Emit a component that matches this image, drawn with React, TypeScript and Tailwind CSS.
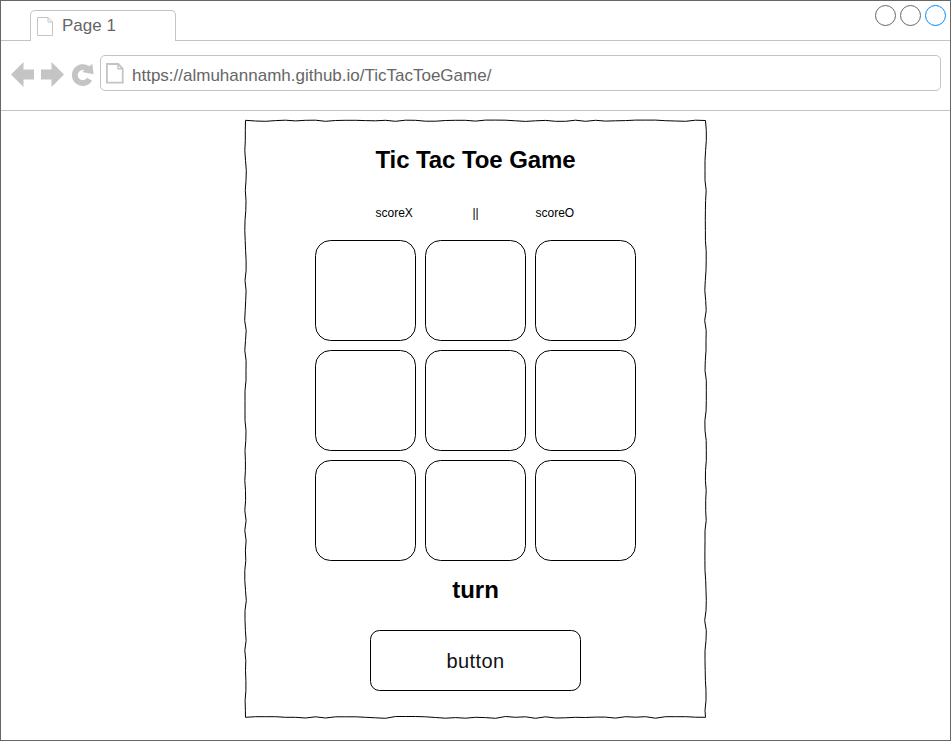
const top = [120.3,121,121.3,120.6,120.2,120.9,120.3,120.2,121.3,120.5,120.3,120.3,120.6,120.8,120.3,121.3,120.2,120.3,121.2,121.2,120.5,120.3,120.3,121.1,120.1,120.1,120.2,120.8,121.4,120.8,120.4,121.3,121.3,120.2,121.3,120.3,121.1,120.8,120.6,120.1,120.1,120.1,120.7,121,121.3,120.2,120.5];
const right = [705.5,706.3,706.3,705.6,705,705,705,706.2,705.6,705.4,705.3,705.4,705.4,706.2,706.2,706,705.3,704.8,705.7,706.2,704.7,706.2,706,706,705.3,705,706.3,706.3,706.3,706.1,704.9,705,706.2,706.3,706.3,705.5,705.4,706.2,705.7,705.7,706.2,705,705,704.9,704.9,705,705.7,706,706.3,706,704.7,706.3,706,705,705,705.2,705.4,706,706,705];
const bottom = [717.3,716.7,716.7,716.7,717.3,717.3,718,716.8,718,716.8,716.8,716.8,717.3,717.8,718.3,716.5,716.5,716.5,716.8,717.5,718.2,717.6,718.2,717.3,717.6,718.3,716.5,717.3,716.8,718.3,716.8,718,717.8,717.3,717.5,717.1,717.1,718.1,716.7,717.2,716.7,718.2,716.7,716.7,716.7,717.2,717.3];
const left = [245.5,245.3,245.3,244.8,245.5,246.3,246,245.3,246,245.8,245,244.8,245.2,245.6,246.1,246.1,245,246.1,245.7,245.2,244.7,246.2,245.5,244.8,246.1,246,246,245,245,245,245,246,245.8,245,245.4,245.4,244.8,245.5,245.6,244.8,246.1,244.8,246.1,245.4,245.8,244.8,244.8,245.5,246.3,245,245,245.4,246.1,244.8,245.8,245.5,245.9,245.9,245.1,245.4];

const points = [
  ...top.map((y, i) => `${245.5 + 10 * i},${y}`),
  ...right.slice(1).map((x, i) => `${x},${130.5 + 10 * i}`),
  ...bottom.map((y, i) => `${245.5 + 10 * i},${y}`).reverse(),
  ...left.map((x, i) => `${x},${120.5 + 10 * i}`).reverse(),
].join(" ");

export default function App() {
  return (
    <div className="relative flex h-[741px] w-[951px] flex-col border border-[#666] bg-white font-['Liberation_Sans',Arial,sans-serif]">
      <header className="flex h-10 shrink-0 items-end">
        <div className="h-px w-[29px] bg-[#c4c4c4]" />
        <div className="flex h-[31px] w-[146px] items-center rounded-t-[5px] border border-b-0 border-[#c4c4c4]">
          <svg className="ml-1.5 h-5 w-4 shrink-0" viewBox="0 0 16 20" fill="none" stroke="#c4c4c4">
            <path d="M.5 1.5H11L15.5 6V19.5H.5ZM11 1.5V6H15.5" />
          </svg>
          <span className="ml-[9px] text-[17px] leading-5 text-[#666]">Page 1</span>
        </div>
        <div className="relative h-full flex-1 border-b border-[#c4c4c4]">
          <svg className="absolute top-0 right-0 h-7 w-20" viewBox="870 1 80 28" fill="none">
            <circle cx="885.5" cy="15.5" r="10" stroke="#666" />
            <circle cx="910.5" cy="15.5" r="10" stroke="#666" />
            <circle cx="935.5" cy="15.5" r="10" stroke="#008cff" />
          </svg>
        </div>
      </header>
      <nav className="flex h-[70px] shrink-0 border-b border-[#c4c4c4] pt-[14px] pl-[9px]">
        <svg className="h-9 w-[90px] shrink-0" viewBox="10 55 90 36" fill="#c4c4c4">
          <path d="M11 74.5L23.5 62V69.5H34V79.5H23.5V87Z" />
          <path d="M64 74.5L51.5 62V69.5H41V79.5H51.5V87Z" />
          <path d="M89.6 79.3A8 8 0 1 1 87.8 68.8" fill="none" stroke="#c4c4c4" strokeWidth="5.8" />
          <path d="M92.3 63.7L93.6 74.3L82.2 72Z" />
        </svg>
        <div className="flex h-9 w-[841px] items-center rounded-[5px] border border-[#c4c4c4]">
          <svg className="ml-[3px] h-[22px] w-5 shrink-0" viewBox="0 0 20 22" fill="none" stroke="#c4c4c4" strokeWidth="1.8">
            <path d="M2.9 2H14.2L18.7 6.6V20.7H2.9Z" />
            <path d="M14 2V6.8H18.7" strokeWidth="1.4" />
          </svg>
          <span className="ml-2 pt-[5px] text-[17px] leading-5 text-[#666]">https://almuhannamh.github.io/TicTacToeGame/</span>
        </div>
      </nav>
      <svg className="pointer-events-none absolute -top-px -left-px h-[741px] w-[951px]" viewBox="0 0 951 741" fill="none" stroke="#000">
        <polygon points={points} strokeMiterlimit="10" />
      </svg>
      <main className="flex flex-col items-center text-black">
        <h1 className="mt-[34px] text-2xl leading-[30px] font-bold tracking-[-0.08px]">Tic Tac Toe Game</h1>
        <div className="mt-[31px] flex h-[14px] w-[200px] text-xs leading-[14px]">
          <span className="w-[97px]">scoreX</span>
          <span className="w-[63px]">||</span>
          <span>scoreO</span>
        </div>
        <div className="mt-5 grid grid-cols-3 gap-[9px]">
          {Array.from({ length: 9 }, (_, i) => (
            <div key={i} className="size-[101px] rounded-[15.5px] border border-black" />
          ))}
        </div>
        <h2 className="mt-[14px] text-2xl leading-[30px] font-bold">turn</h2>
        <button className="mt-[25px] h-[61px] w-[211px] rounded-[9.5px] border border-black text-xl tracking-[0.4px] text-[#111]">button</button>
      </main>
    </div>
  );
}
